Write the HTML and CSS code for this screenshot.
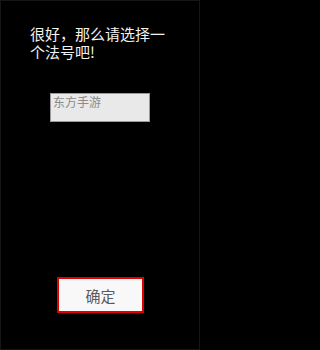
FILE: index.html
```html
<!DOCTYPE html>
<html>
<head>
<meta charset="utf-8">
<link rel="stylesheet" href="styles.css">
</head>
<body>
<div class="screen">
  <div class="title">很好，那么请选择一个法号吧!</div>
  <div class="field">东方手游</div>
  <div class="spacer"></div>
  <div class="btn">确定</div>
</div>
</body>
</html>
```

FILE: styles.css
```css
html, body {
  margin: 0;
  padding: 0;
  background: #000;
}
.screen {
  box-sizing: border-box;
  width: 200px;
  height: 350px;
  border: 1px solid #161616;
  display: flex;
  flex-direction: column;
  font-family: "Noto Sans CJK SC", "DejaVu Sans", sans-serif;
}
.title {
  margin: 24px 0 0 29px;
  width: 140px;
  color: #f2f2f2;
  font-size: 15px;
  line-height: 18px;
}
.field {
  box-sizing: border-box;
  margin: 32px 0 0 49px;
  width: 100px;
  height: 29px;
  background: #e9e9e9;
  border: 1px solid #9a9a9a;
  color: #8a8a8a;
  font-size: 12px;
  line-height: 14px;
  padding: 1px 0 0 2px;
}
.spacer { height: 155px; }
.btn {
  box-sizing: border-box;
  margin-left: 56px;
  width: 87px;
  height: 36px;
  border: 2px solid #e00000;
  background: #f8f8f8;
  color: #5a5a5a;
  font-size: 15px;
  display: flex;
  align-items: center;
  justify-content: center;
}
```
